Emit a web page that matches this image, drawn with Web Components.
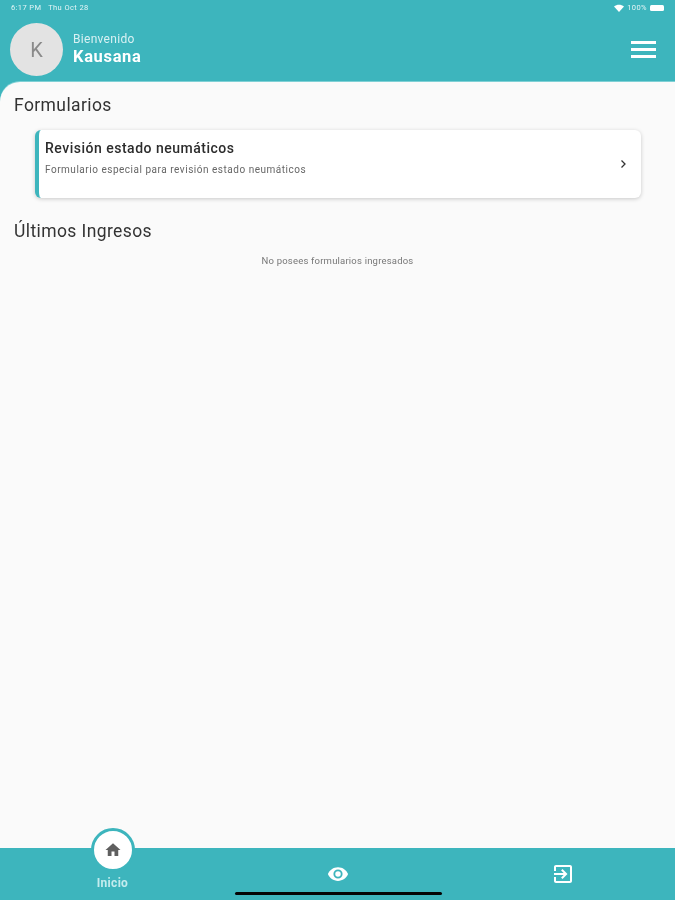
<!DOCTYPE html>
<html lang="es">
<head>
<meta charset="utf-8">
<title>Inicio</title>
<style>
  html, body { margin: 0; height: 100%; }
  body { font-family: Roboto, "Liberation Sans", sans-serif; overflow: hidden; }
</style>
</head>
<body>
<app-shell>
  <app-header slot="header" name="Kausana" initial="K"></app-header>
  <section-title>Formularios</section-title>
  <form-card heading="Revisión estado neumáticos" text="Formulario especial para revisión estado neumáticos"></form-card>
  <section-title class="second">Últimos Ingresos</section-title>
  <empty-note>No posees formularios ingresados</empty-note>
  <bottom-nav slot="footer"></bottom-nav>
</app-shell>

<script>
class AppShell extends HTMLElement {
  constructor() {
    super()
    this.attachShadow({ mode: "open" })
    this.shadowRoot.innerHTML = `
    <style>
      :host {
        display: flex;
        flex-direction: column;
        width: 675px;
        height: 900px;
        background: #3db5bd;
        filter: blur(0.35px);
      }
      main {
        flex: 1;
        background: #fafafa;
        border-top-left-radius: 20px;
        box-shadow: 0 -1px 0 #7fd0d5;
        padding-top: 13px;
      }
    </style>
    <slot name="header"></slot>
    <main><slot></slot></main>
    <slot name="footer"></slot>
  `
  }
}

class AppHeader extends HTMLElement {
  constructor() {
    super()
    this.attachShadow({ mode: "open" })
    const name = this.getAttribute("name")
    const initial = this.getAttribute("initial")
    this.shadowRoot.innerHTML = `
    <style>
      :host {
        display: block;
        height: 82px;
        color: #fff;
      }
      .status {
        display: flex;
        justify-content: space-between;
        align-items: center;
        height: 15px;
        padding: 0 11px;
        font-size: 7.5px;
        letter-spacing: .4px;
        color: #e4f5f6;
      }
      .right { display: flex; align-items: center; gap: 3px; }
      .battery {
        width: 14px;
        height: 6px;
        border-radius: 1.5px;
        background: #fff;
      }
      .row {
        display: flex;
        align-items: center;
        height: 53px;
        margin-top: 8px;
        padding: 0 19px 0 10px;
      }
      .avatar {
        display: flex;
        align-items: center;
        justify-content: center;
        width: 53px;
        height: 53px;
        border-radius: 50%;
        background: #e3e3e3;
        color: #8a8a8a;
        font-size: 20px;
      }
      .who { margin-left: 10px; flex: 1; }
      .hello { font-size: 12px; line-height: 14px; color: #d8f1f3; letter-spacing: .3px; }
      .name { font-size: 16.5px; line-height: 20px; font-weight: 700; letter-spacing: .65px; margin-top: 1px; }
      .menu {
        display: flex;
        flex-direction: column;
        gap: 4px;
        width: 25px;
      }
      .menu i { display: block; height: 3px; background: #fff; }
    </style>
    <div class="status">
      <span>6:17 PM&nbsp;&nbsp;&nbsp;Thu Oct 28</span>
      <div class="right">
        <svg width="10" height="8" viewBox="0 0 10 8"><path fill="#fff" d="M0 2.6C2.8 0 7.2 0 10 2.6L5 8z"/></svg>
        <span>100%</span>
        <div class="battery"></div>
      </div>
    </div>
    <div class="row">
      <div class="avatar">${initial}</div>
      <div class="who">
        <div class="hello">Bienvenido</div>
        <div class="name">${name}</div>
      </div>
      <div class="menu"><i></i><i></i><i></i></div>
    </div>
  `
  }
}

class SectionTitle extends HTMLElement {
  constructor() {
    super()
    this.attachShadow({ mode: "open" })
    this.shadowRoot.innerHTML = `
    <style>
      :host {
        display: block;
        padding-left: 14px;
        font-size: 17.5px;
        line-height: 20px;
        letter-spacing: .4px;
        color: #333;
      }
      :host(.second) { margin-top: 23px; }
    </style>
    <slot></slot>
  `
  }
}

class FormCard extends HTMLElement {
  constructor() {
    super()
    this.attachShadow({ mode: "open" })
    this.shadowRoot.innerHTML = `
    <style>
      :host {
        display: flex;
        align-items: center;
        box-sizing: border-box;
        width: 606px;
        height: 68px;
        margin: 15px 0 0 35px;
        padding: 0 14px 0 6px;
        background: #fff;
        border-left: 4px solid #3db5bd;
        border-radius: 6px;
        box-shadow: 0 1px 4px rgba(0,0,0,.2);
      }
      .body { flex: 1; align-self: flex-start; padding-top: 9px; }
      .heading { font-size: 14px; line-height: 18px; font-weight: 500; letter-spacing: .5px; color: #2c2c2c; }
      .text { font-size: 10px; line-height: 12px; margin-top: 7px; letter-spacing: .52px; color: #666; }
      svg { display: block; }
    </style>
    <div class="body">
      <div class="heading">${this.getAttribute("heading")}</div>
      <div class="text">${this.getAttribute("text")}</div>
    </div>
    <svg width="8" height="10" viewBox="0 0 8 10"><path fill="none" stroke="#333" stroke-width="1.3" d="M2.500 1.500l3.500 3.500-3.500 3.500"/></svg>
  `
  }
}

class EmptyNote extends HTMLElement {
  constructor() {
    super()
    this.attachShadow({ mode: "open" })
    this.shadowRoot.innerHTML = `
    <style>
      :host {
        display: block;
        margin-top: 14px;
        text-align: center;
        font-size: 9.5px;
        line-height: 12px;
        letter-spacing: .2px;
        color: #777;
      }
    </style>
    <slot></slot>
  `
  }
}

class BottomNav extends HTMLElement {
  constructor() {
    super()
    this.attachShadow({ mode: "open" })
    this.shadowRoot.innerHTML = `
    <style>
      :host {
        display: grid;
        grid-template-columns: repeat(3, 1fr);
        position: relative;
        height: 52px;
        background: #3db5bd;
      }
      .item {
        display: flex;
        align-items: center;
        justify-content: center;
        position: relative;
        height: 52px;
      }
      .bubble {
        position: absolute;
        top: -20px;
        left: 91px;
        display: flex;
        align-items: center;
        justify-content: center;
        box-sizing: border-box;
        width: 44px;
        height: 44px;
        border-radius: 50%;
        background: #fff;
        border: 3px solid #3db5bd;
      }
      .label {
        position: absolute;
        top: 28px;
        left: 0;
        right: 0;
        text-align: center;
        font-size: 12px;
        line-height: 14px;
        font-weight: 700;
        letter-spacing: .3px;
        color: #c4ecee;
      }
      .indicator {
        position: absolute;
        left: 235px;
        top: 44px;
        width: 207px;
        height: 3px;
        border-radius: 2px;
        background: #050505;
      }
      svg { display: block; }
    </style>
    <div class="item">
      <div class="bubble">
        <svg width="18" height="18" viewBox="0 0 24 24"><path fill="#5f5f5f" d="M10 20v-6h4v6h5v-8h3L12 3 2 12h3v8z"/></svg>
      </div>
      <div class="label">Inicio</div>
    </div>
    <div class="item">
      <svg width="22" height="22" viewBox="0 0 24 24"><path fill="#fff" d="M12 4.5C7 4.500 2.700 7.600 1 12c1.700 4.400 6 7.500 11 7.500s9.300-3.100 11-7.500c-1.700-4.400-6-7.500-11-7.500zM12 17a5 5 0 1 1 0-10 5 5 0 0 1 0 10zm0-8a3 3 0 1 0 0 6 3 3 0 0 0 0-6z"/></svg>
    </div>
    <div class="item">
      <svg width="24" height="24" viewBox="0 0 24 24"><path fill="#fff" d="M10.090 15.590L11.500 17l5-5-5-5-1.410 1.410L12.670 11H3v2h9.670l-2.580 2.590zM19 3H5c-1.110 0-2 .9-2 2v4h2V5h14v14H5v-4H3v4c0 1.100.89 2 2 2h14c1.100 0 2-.9 2-2V5c0-1.100-.9-2-2-2z"/></svg>
    </div>
    <div class="indicator"></div>
  `
  }
}

customElements.define("app-shell", AppShell)
customElements.define("app-header", AppHeader)
customElements.define("section-title", SectionTitle)
customElements.define("form-card", FormCard)
customElements.define("empty-note", EmptyNote)
customElements.define("bottom-nav", BottomNav)
</script>
</body>
</html>
